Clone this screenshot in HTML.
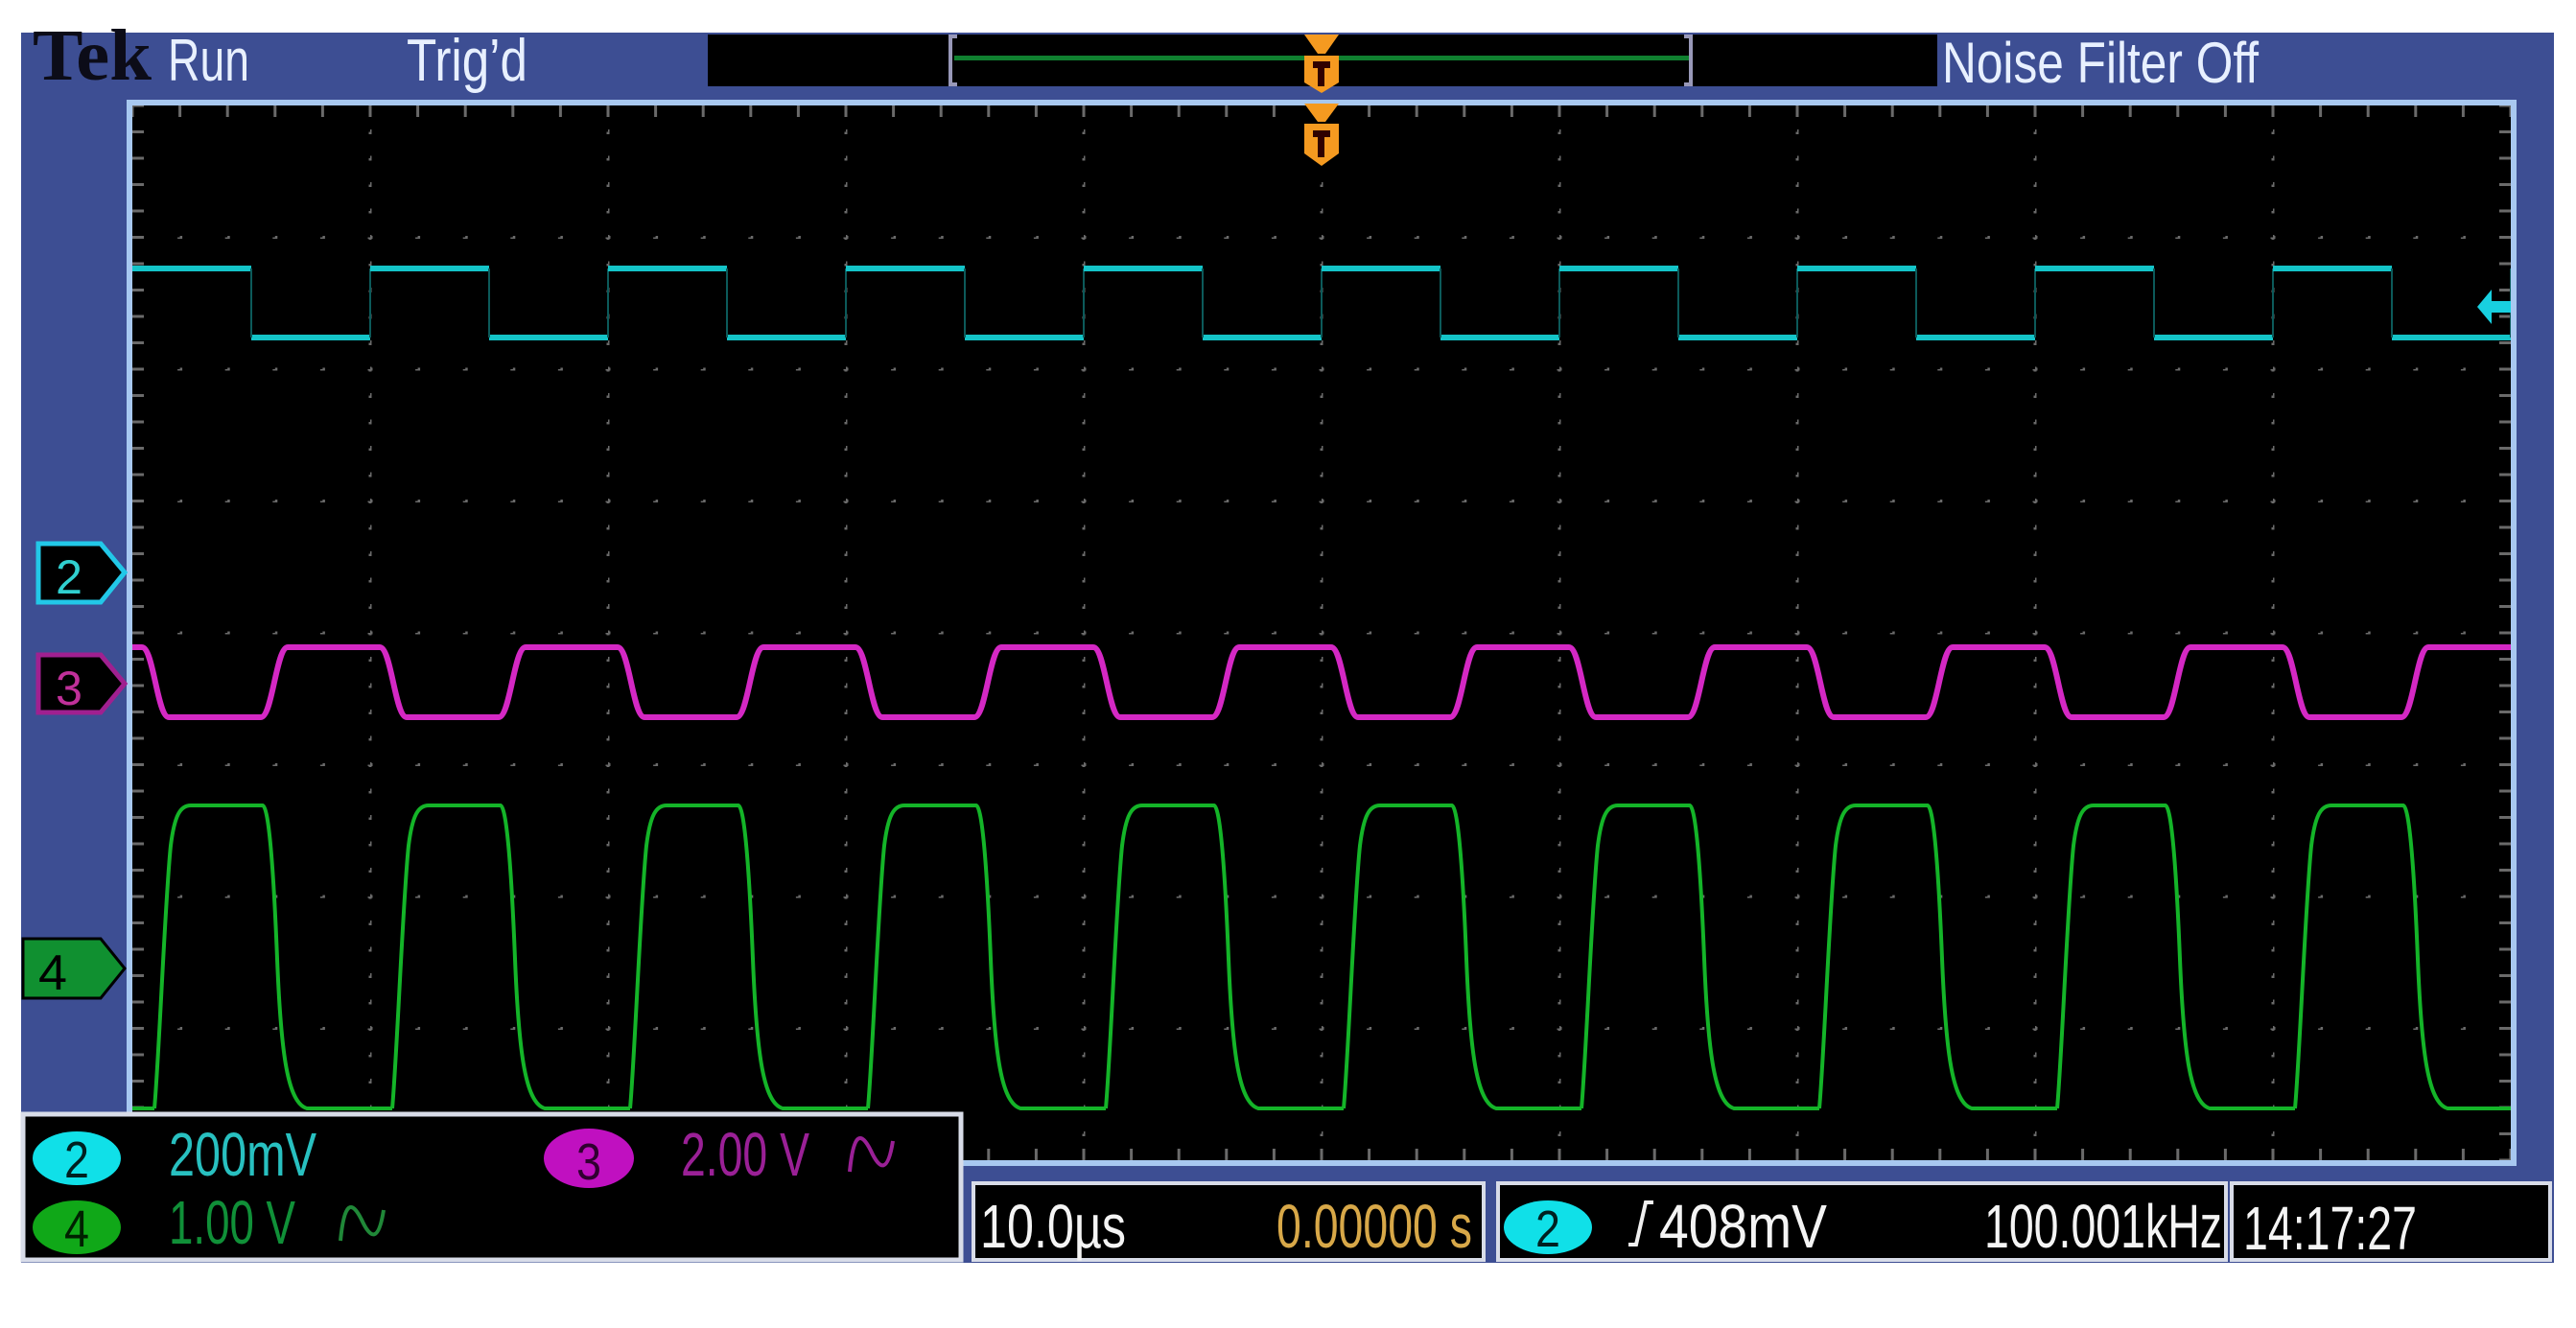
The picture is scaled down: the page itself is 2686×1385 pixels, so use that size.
<!DOCTYPE html>
<html><head><meta charset="utf-8"><style>
html,body{margin:0;padding:0;background:#fff;}
svg{display:block;}
text{font-family:"Liberation Sans",sans-serif;}
</style></head><body>
<svg width="2686" height="1385" viewBox="0 0 2686 1385" xmlns="http://www.w3.org/2000/svg">
<defs>
<pattern id="vd" x="138" y="110" width="248" height="27.5" patternUnits="userSpaceOnUse"><rect x="-1.5" y="-2.5" width="3" height="5" fill="#6a6a6a"/><rect x="246.5" y="-2.5" width="3" height="5" fill="#6a6a6a"/><rect x="-1.5" y="25" width="3" height="5" fill="#6a6a6a"/></pattern>
<pattern id="hd" x="138" y="110" width="49.6" height="137.5" patternUnits="userSpaceOnUse"><rect x="-2.5" y="-1.5" width="5" height="3" fill="#6a6a6a"/><rect x="47.1" y="-1.5" width="5" height="3" fill="#6a6a6a"/><rect x="-2.5" y="136" width="5" height="3" fill="#6a6a6a"/></pattern>
<pattern id="tx" x="138" y="0" width="49.6" height="20" patternUnits="userSpaceOnUse"><rect x="-1.5" y="0" width="3" height="20" fill="#6a6a6a"/><rect x="48.1" y="0" width="3" height="20" fill="#6a6a6a"/></pattern>
<pattern id="ty" x="0" y="110" width="20" height="27.5" patternUnits="userSpaceOnUse"><rect x="0" y="-1.5" width="20" height="3" fill="#6a6a6a"/><rect x="0" y="26" width="20" height="3" fill="#6a6a6a"/></pattern>
<clipPath id="gc"><rect x="138" y="110" width="2480" height="1100"/></clipPath>
<g id="p2"><path d="M0,280 H124" stroke="#14c4c8" stroke-width="6" fill="none"/><path d="M124,352 H248" stroke="#14c4c8" stroke-width="6" fill="none"/><path d="M124,280 V352 M248,352 V280" stroke="#0c5a5a" stroke-width="2" fill="none"/></g>
<path id="p3" d="M134,748 C146,748 150,675 162,675 H258 C270,675 274,748 286,748 H382" stroke="#d428c4" stroke-width="6" fill="none"/>
<path id="p4" d="M23,1156 C28,1100 34,940 40,882 C44,850 50,840 61,840 H136 C142,842 147,900 151,1000 C155,1100 162,1150 182,1156 H271" stroke="#14b428" stroke-width="4" fill="none"/>
</defs>
<rect x="0" y="0" width="2686" height="1385" fill="#fff"/>
<rect x="22" y="34" width="2641" height="1283" fill="#3d4e93"/>
<text x="34" y="83" style="font-family:'Liberation Serif',serif;font-weight:bold" font-size="76" fill="#0c0c18" textLength="124" lengthAdjust="spacingAndGlyphs">Tek</text>
<text x="175" y="84" font-size="62" fill="#e8f0ff" textLength="85" lengthAdjust="spacingAndGlyphs">Run</text>
<text x="424" y="84" font-size="62" fill="#e8f0ff" textLength="126" lengthAdjust="spacingAndGlyphs">Trig’d</text>
<rect x="738" y="36" width="1282" height="54" fill="#000"/>
<path d="M998,38 H991 V88 H998 M1756,38 H1763 V88 H1756" stroke="#9898b8" stroke-width="4" fill="none"/>
<rect x="995" y="58" width="766" height="5" fill="#108030"/>
<text x="2025" y="86" font-size="60" fill="#e8f0ff" textLength="330" lengthAdjust="spacingAndGlyphs">Noise Filter Off</text>
<rect x="132" y="104" width="2492" height="1112" fill="#a8c8f0"/>
<rect x="138" y="110" width="2480" height="1100" fill="#000"/>
<g clip-path="url(#gc)">
<rect x="200" y="110" width="2380" height="1100" fill="url(#vd)"/>
<rect x="138" y="240" width="2480" height="900" fill="url(#hd)"/>
<rect x="138" y="110" width="2480" height="12" fill="url(#tx)"/>
<rect x="138" y="1198" width="2480" height="12" fill="url(#tx)"/>
<rect x="138" y="110" width="12" height="1100" fill="url(#ty)"/>
<rect x="2606" y="110" width="12" height="1100" fill="url(#ty)"/>
<g transform="translate(138,0)">
<use href="#p2" x="0"/><use href="#p2" x="248"/><use href="#p2" x="496"/><use href="#p2" x="744"/><use href="#p2" x="992"/><use href="#p2" x="1240"/><use href="#p2" x="1488"/><use href="#p2" x="1736"/><use href="#p2" x="1984"/><use href="#p2" x="2232"/>
<use href="#p3" x="-248"/><use href="#p3" x="0"/><use href="#p3" x="248"/><use href="#p3" x="496"/><use href="#p3" x="744"/><use href="#p3" x="992"/><use href="#p3" x="1240"/><use href="#p3" x="1488"/><use href="#p3" x="1736"/><use href="#p3" x="1984"/><use href="#p3" x="2232"/>
<use href="#p4" x="-248"/><use href="#p4" x="0"/><use href="#p4" x="248"/><use href="#p4" x="496"/><use href="#p4" x="744"/><use href="#p4" x="992"/><use href="#p4" x="1240"/><use href="#p4" x="1488"/><use href="#p4" x="1736"/><use href="#p4" x="1984"/><use href="#p4" x="2232"/>
</g>
<path d="M2583,320 L2598,302 V314 H2618 V326 H2598 V338 Z" fill="#18d0e0"/>
</g>
<g fill="#f59a20">
<polygon points="1360,36 1396,36 1382,56 1374,56"/>
<polygon points="1360,58 1396,58 1396,86 1378,97 1360,86"/>
<polygon points="1360,108 1396,108 1382,127 1374,127"/>
<polygon points="1360,129 1396,129 1396,160 1378,173 1360,160"/>
</g>
<g fill="#300000"><rect x="1369" y="64" width="18" height="7"/><rect x="1374" y="64" width="7" height="26"/><rect x="1369" y="136" width="18" height="7"/><rect x="1374" y="136" width="7" height="28"/></g>
<polygon points="40,567 105,567 130,597 105,628 40,628" fill="#000" stroke="#22c8e8" stroke-width="5"/>
<text x="58" y="619" font-size="50" fill="#30d0d0" textLength="28" lengthAdjust="spacingAndGlyphs">2</text>
<polygon points="40,683 105,683 130,713 105,743 40,743" fill="#000" stroke="#a02090" stroke-width="5"/>
<text x="58" y="735" font-size="50" fill="#c0309a" textLength="28" lengthAdjust="spacingAndGlyphs">3</text>
<polygon points="24,979 105,979 130,1010 105,1041 24,1041" fill="#109030" stroke="#000" stroke-width="3"/>
<text x="40" y="1032" font-size="52" fill="#000" textLength="30" lengthAdjust="spacingAndGlyphs">4</text>
<rect x="24" y="1162" width="978" height="152" fill="#000" stroke="#d8dce8" stroke-width="5"/>
<ellipse cx="80" cy="1208" rx="46" ry="28" fill="#10e0e8"/>
<text x="67" y="1228" font-size="54" fill="#002020" textLength="26" lengthAdjust="spacingAndGlyphs">2</text>
<text x="176" y="1226" font-size="64" fill="#28c0c0" textLength="154" lengthAdjust="spacingAndGlyphs">200mV</text>
<ellipse cx="614" cy="1208" rx="47" ry="31" fill="#c010c0"/>
<text x="601" y="1230" font-size="54" fill="#300030" textLength="26" lengthAdjust="spacingAndGlyphs">3</text>
<text x="710" y="1226" font-size="64" fill="#9a2096" textLength="134" lengthAdjust="spacingAndGlyphs">2.00 V</text>
<path d="M886,1222 C890,1180 898,1180 908,1200 C918,1222 926,1222 931,1190" stroke="#9a2096" stroke-width="4" fill="none"/>
<ellipse cx="80" cy="1280" rx="46" ry="28" fill="#10a818"/>
<text x="67" y="1300" font-size="54" fill="#002000" textLength="26" lengthAdjust="spacingAndGlyphs">4</text>
<text x="176" y="1297" font-size="64" fill="#109038" textLength="132" lengthAdjust="spacingAndGlyphs">1.00 V</text>
<path d="M355,1294 C359,1252 367,1252 377,1272 C387,1294 395,1294 400,1262" stroke="#208838" stroke-width="4" fill="none"/>
<rect x="1015" y="1234" width="532" height="80" fill="#000" stroke="#d8dce8" stroke-width="4"/>
<text x="1022" y="1301" font-size="64" fill="#f4f4f4" textLength="152" lengthAdjust="spacingAndGlyphs">10.0µs</text>
<text x="1331" y="1301" font-size="64" fill="#d8a848" textLength="204" lengthAdjust="spacingAndGlyphs">0.00000 s</text>
<rect x="1562" y="1234" width="759" height="80" fill="#000" stroke="#d8dce8" stroke-width="4"/>
<ellipse cx="1614" cy="1280" rx="46" ry="28" fill="#10e0e8"/>
<text x="1601" y="1300" font-size="54" fill="#002020" textLength="26" lengthAdjust="spacingAndGlyphs">2</text>
<path d="M1698,1298 H1706 L1716,1254 H1724" stroke="#f0f0f0" stroke-width="4" fill="none"/>
<text x="1730" y="1301" font-size="64" fill="#f4f4f4" textLength="175" lengthAdjust="spacingAndGlyphs">408mV</text>
<text x="2069" y="1301" font-size="64" fill="#f4f4f4" textLength="248" lengthAdjust="spacingAndGlyphs">100.001kHz</text>
<rect x="2327" y="1234" width="332" height="80" fill="#000" stroke="#d8dce8" stroke-width="4"/>
<text x="2339" y="1303" font-size="64" fill="#f4f4f4" textLength="181" lengthAdjust="spacingAndGlyphs">14:17:27</text>
</svg>
</body></html>
